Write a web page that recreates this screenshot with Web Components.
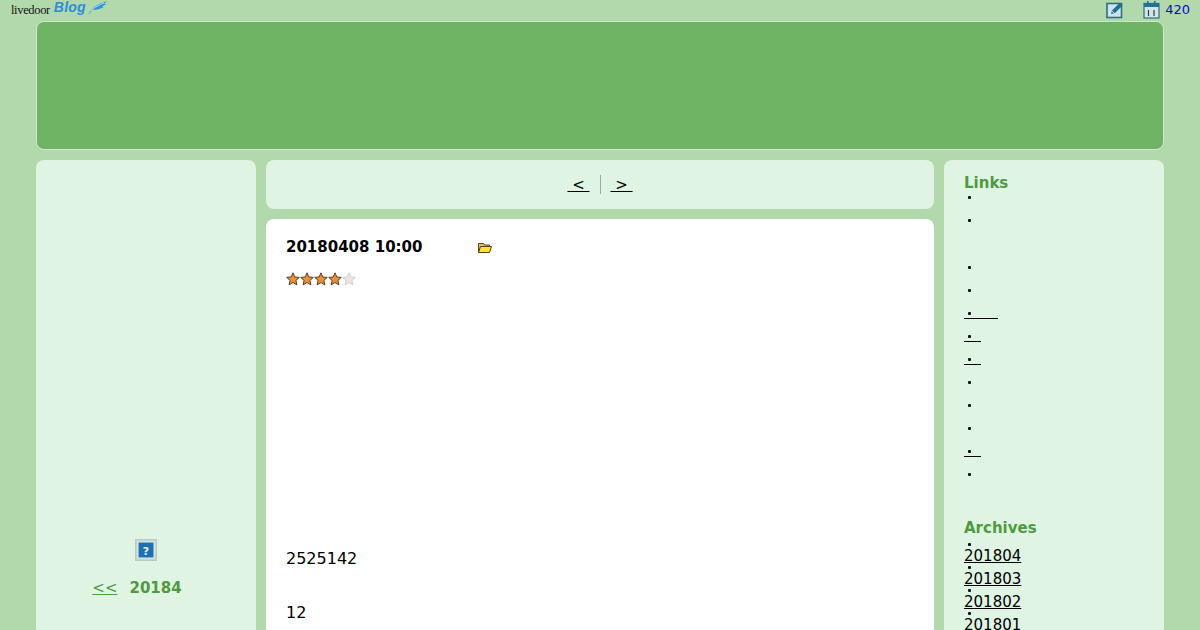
<!DOCTYPE html>
<html lang="ja"><head><meta charset="utf-8"><title>Blog</title>
<style>
html,body{margin:0;padding:0;height:630px;overflow:hidden;background:#b2d9ab;font-family:"DejaVu Sans",sans-serif;color:#000}
</style></head><body>
<blog-page></blog-page>
<template id="t-top"><style>
:host{display:flex;height:20px;align-items:flex-start;justify-content:space-between;padding:0 10px 1px 11px;overflow:hidden}
.logo{display:flex;align-items:flex-start;height:20px;position:relative}
.ld{font:12.5px/18px "Liberation Serif",serif;color:#111;letter-spacing:-.35px;transform:scaleY(1.05);transform-origin:top left}
.bl{font:italic bold 14px/15px "Liberation Sans",sans-serif;color:#2a8fd8;margin-left:4px;letter-spacing:.2px}
.r{display:flex;align-items:flex-start;padding-top:1px}
.r svg{display:block}.r span{font-size:13px;line-height:18px;color:#0a0ac8;margin-left:5px}
.c{margin-left:19px}
</style>
<div class="logo"><span class="ld">livedoor</span><span class="bl">Blog</span>
<svg width="22" height="15" viewBox="0 0 22 15" style="margin-left:1px"><path d="M1 15C5 8 9 4 21 1 19 2 18 3 17 4L20 4C17 5 16 6 15 7L17 7C13 9 10 10 6 10 4 11 3 13 1 15Z" fill="#2a93dc"/><path d="M4 11C8 7 12 5 17 3" stroke="#d6eefa" stroke-width=".8" fill="none"/></svg></div>
<div class="r">
<svg width="18" height="18" viewBox="0 0 18 18"><rect x="1" y="2.5" width="14.5" height="14" fill="#cfe4ea" stroke="#2c6f86" stroke-width="1.6"/><path d="M5 13l1-3.5L13.5 2 16.5 4.5 9 12Z" fill="#1f6f96"/><path d="M6 10l2.5 2.5" stroke="#dff" stroke-width=".8"/></svg>
<svg class="c" width="17" height="18" viewBox="0 0 17 18"><rect x="1" y="2.5" width="15" height="14.5" fill="#d4e6e4" stroke="#2c6f86" stroke-width="1.2"/><rect x="1" y="2" width="15" height="4" fill="#1f7296"/><rect x="4" y="0" width="1.6" height="4" fill="#1f7296"/><rect x="11" y="0" width="1.6" height="4" fill="#1f7296"/><path d="M5.5 9v6M11 9v6" stroke="#23424f" stroke-width="1.2"/></svg>
<span>420</span></div></template>

<template id="t-panel"><style>
:host{display:block;background:var(--bg,#dff4e2);border-radius:8px 8px 0 0;box-sizing:border-box}
:host([round]){border-radius:8px}
</style><slot></slot></template>

<template id="t-star"><style>:host{display:inline-block;width:14px;height:14px}svg{display:block}</style>
<svg width="14" height="14" viewBox="0 0 14 14"><path id="p" d="M7 .8 8.8 5 13.3 5.4 9.9 8.4 10.9 12.9 7 10.5 3.1 12.9 4.1 8.4.7 5.4 5.2 5Z" stroke-width="1"/></svg></template>

<template id="t-list"><style>
:host{display:block;font-size:15px;line-height:22px}
::slotted(*){display:block}
</style><slot></slot></template>

<template id="t-item"><style>
:host{display:flex;height:22px;align-items:center;font-size:15px;color:#000}
i{display:block;width:3px;height:3px;background:#111;margin:1px 7px 0 4px;border-radius:1px;flex:none}
a{color:#000;text-decoration:underline;display:block;line-height:20px}
b{display:block;height:20px;border-bottom:1px solid #000;box-sizing:border-box;margin-top:6px;height:21px}
</style><i></i><span id="c"></span></template>

<template id="t-page"><style>
:host{display:block;width:1200px}
.hd{height:127px;margin:0 36px;background:#6fb465;border:1px solid #cfe8c9;border-radius:8px}
.cols{display:grid;grid-template-columns:220px 668px 220px;gap:10px;margin:10px 36px 0;align-items:start}
.left{height:470px;padding-top:379px;box-sizing:border-box;text-align:center;display:block}
.q{display:flex;justify-content:center}
.prev{margin-top:17px;font-size:15px;line-height:20px;color:#4f9a3f;padding-right:18px}
.prev a{color:#4f9a3f;text-decoration:underline}
.prev b{margin-left:12px;font-weight:bold}
.center{display:flex;flex-direction:column;gap:10px}
.nav{height:49px;display:flex;justify-content:center;align-items:center;font-size:15px}
.nav a{color:#000;text-decoration:underline;white-space:pre}
.nav i{display:block;width:1px;height:19px;background:#9ab39e;margin:0 10px}
.post{height:420px;padding:19px 20px 0;box-sizing:border-box}
.meta{display:flex;align-items:center;height:18px;font-size:15px;font-weight:bold}
.meta svg{margin-left:55px}
.stars{display:flex;padding-top:14px;padding-left:0;height:17px;align-items:center}
.p1{margin-top:262px;font-size:16px;line-height:20px}
.p2{margin-top:34px;font-size:16px;line-height:20px}
.right{height:470px;padding:14px 0 0 20px;box-sizing:border-box;overflow:hidden}
h3{margin:0;font-size:15px;line-height:18px;font-weight:bold;color:#4f9a3f}
.l1{margin-top:4px}
.l2{margin-top:25px}
.arch{margin-top:24px}
.l3{margin-top:6px}
</style>
<top-bar></top-bar>
<div class="hd"></div>
<div class="cols">
<blog-panel class="left">
<div class="q"><svg width="22" height="22" viewBox="0 0 22 22"><rect x=".5" y=".5" width="21" height="21" fill="#c4d6ce" stroke="#b7ccc2"/><rect x="3" y="3" width="16" height="16" fill="#1f6fb4"/><rect x="3" y="3" width="16" height="16" fill="none" stroke="#e6f0f4" stroke-width="1"/><text x="11" y="15.5" font-family="DejaVu Sans" font-size="11" font-weight="bold" fill="#e8f3fb" text-anchor="middle">?</text></svg></div>
<div class="prev"><a href="#">&lt;&lt;</a><b>20184</b></div>
</blog-panel>
<div class="center">
<blog-panel round class="nav"><a href="#"> &lt; </a><i></i><a href="#"> &gt; </a></blog-panel>
<blog-panel class="post" style="--bg:#fff">
<div class="meta">20180408 10:00<svg width="16" height="13" viewBox="0 0 16 13"><path d="M1.5 11.5V2.5h5l1 1.5h5v2" fill="#e8c53a" stroke="#4d4420"/><path d="M1.5 11.5 3.5 5.5h11l-2 6Z" fill="#ffe22e" stroke="#4d4420"/></svg></div>
<div class="stars"><blog-star on></blog-star><blog-star on></blog-star><blog-star on></blog-star><blog-star on></blog-star><blog-star></blog-star></div>
<div class="p1">2525142</div>
<div class="p2">12</div>
</blog-panel>
</div>
<blog-panel class="right">
<h3>Links</h3>
<blog-list class="l1"><blog-item></blog-item><blog-item></blog-item></blog-list>
<blog-list class="l2"><blog-item></blog-item><blog-item w="34"></blog-item><blog-item w="17"></blog-item><blog-item w="17"></blog-item><blog-item></blog-item><blog-item></blog-item><blog-item></blog-item><blog-item w="17"></blog-item><blog-item></blog-item><blog-item></blog-item></blog-list>
<h3 class="arch">Archives</h3>
<blog-list class="l3"><blog-item t="201804"></blog-item><blog-item t="201803"></blog-item><blog-item t="201802"></blog-item><blog-item t="201801"></blog-item></blog-list>
</blog-panel>
</div></template>
<script>
function tpl(id,host){const r=host.attachShadow({mode:'open'});r.appendChild(document.getElementById(id).content.cloneNode(true));return r}
customElements.define('top-bar',class extends HTMLElement{constructor(){super();tpl('t-top',this)}});
customElements.define('blog-panel',class extends HTMLElement{constructor(){super();tpl('t-panel',this)}});
customElements.define('blog-list',class extends HTMLElement{constructor(){super();tpl('t-list',this)}});
customElements.define('blog-star',class extends HTMLElement{connectedCallback(){const r=this.shadowRoot||tpl('t-star',this);const p=r.getElementById('p');
 if(this.hasAttribute('on')){p.setAttribute('fill','#e8913a');p.setAttribute('stroke','#5a4020')}else{p.setAttribute('fill','#e8e8e8');p.setAttribute('stroke','#cfcfcf')}}});
customElements.define('blog-item',class extends HTMLElement{connectedCallback(){const r=this.shadowRoot||tpl('t-item',this);const c=r.getElementById('c');
 if(this.getAttribute('t')){const a=document.createElement('a');a.href='#';a.textContent=this.getAttribute('t');c.appendChild(a)}
 else if(this.getAttribute('w')){const b=document.createElement('b');b.style.width=this.getAttribute('w')+'px';c.appendChild(b)}}});
customElements.define('blog-page',class extends HTMLElement{constructor(){super();tpl('t-page',this)}});
</script>
</body></html>
